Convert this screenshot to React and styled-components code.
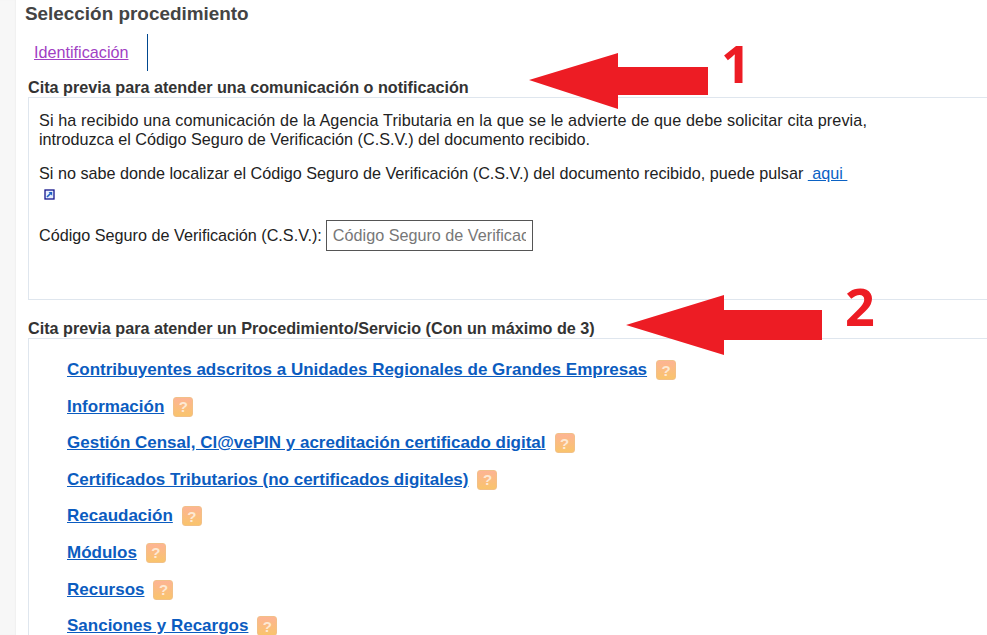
import React from 'react';
import styled, { createGlobalStyle } from 'styled-components';

const procedures = [
    'Contribuyentes adscritos a Unidades Regionales de Grandes Empresas',
    'Información',
    'Gestión Censal, Cl@vePIN y acreditación certificado digital',
    'Certificados Tributarios (no certificados digitales)',
    'Recaudación',
    'Módulos',
    'Recursos',
    'Sanciones y Recargos',
];

const App = () => (
    <Page>
        <GlobalStyle />
        <Sidebar />
        <Main>
            <Title>Selección procedimiento</Title>
            <Tabs>
                <Tab href="#">Identificación</Tab>
            </Tabs>
            <SectionTitle>Cita previa para atender una comunicación o notificación</SectionTitle>
            <CsvPanel>
                <p>
                    <WideLine>Si ha recibido una comunicación de la Agencia Tributaria en la que se le advierte de que debe solicitar cita previa,</WideLine><br />
                    introduzca el Código Seguro de Verificación (C.S.V.) del documento recibido.
                </p>
                <HelpText>
                    Si no sabe donde localizar el Código Seguro de Verificación (C.S.V.) del documento recibido, puede pulsar <HereLink href="#">&nbsp;aqui&nbsp;</HereLink>
                    <ExternalIcon viewBox="0 0 11 11">
                        <rect x="1" y="1" width="9" height="9" fill="#e6edfc" stroke="#14148c" strokeWidth="1.3" />
                        <path d="M3 8 L6.5 4.5" fill="none" stroke="#1c5fc4" strokeWidth="1.6" />
                        <path d="M4.5 3 H8.2 V6.7 Z" fill="#1c5fc4" />
                    </ExternalIcon>
                </HelpText>
                <CsvRow>
                    <label>Código Seguro de Verificación (C.S.V.):</label>
                    <CsvInput placeholder="Código Seguro de Verificación" />
                </CsvRow>
            </CsvPanel>
            <SecondTitle>Cita previa para atender un Procedimiento/Servicio (Con un máximo de 3)</SecondTitle>
            <ProcedurePanel>
                {procedures.map((name) => (
                    <Procedure key={name}>
                        <ProcedureLink href="#">{name}</ProcedureLink>
                        <HelpBadge>?</HelpBadge>
                    </Procedure>
                ))}
            </ProcedurePanel>
        </Main>
        <Arrow $left={529} $top={53} width="180" height="56" viewBox="0 0 180 56">
            <path d="M0 27 L89 0 V14 H179 V42 H89 V56 Z" fill="#ed1c24" />
        </Arrow>
        <Number $left={721} $top={33}>1</Number>
        <Arrow $left={626} $top={295} width="196" height="60" viewBox="0 0 196 60">
            <path d="M0 30 L98 0 V15 H196 V45 H98 V60 Z" fill="#ed1c24" />
        </Arrow>
        <Number $left={845} $top={276}>2</Number>
    </Page>
);

export default App;

const GlobalStyle = createGlobalStyle`
    html, body {
        margin: 0;
        background: #fff;
        overflow: hidden;
    }
    body {
        font-family: "Liberation Sans", Arial, sans-serif;
    }
`;

const Page = styled.div`
    position: relative;
    display: flex;
    width: 987px;
    height: 635px;
    overflow: hidden;
`;

const Sidebar = styled.div`
    flex: 0 0 16px;
    background: #f7f7f7;
    box-shadow: inset -1px 0 1px #f0f0f0;
`;

const Main = styled.div`
    flex: 1;
    min-width: 0;
    padding: 3px 0 0 9px;
`;

const Title = styled.h1`
    margin: 0;
    font-size: 18.9px;
    line-height: 21px;
    font-weight: bold;
    color: #444;
`;

const Tabs = styled.div`
    display: flex;
    margin: 10px 0 0 0;
    height: 37px;
`;

const Tab = styled.a`
    display: flex;
    align-items: center;
    padding: 0 18px 0 9px;
    border-right: 1px solid #00478f;
    font-size: 16.2px;
    color: #a13fc4;
    text-decoration: underline;
`;

const SectionTitle = styled.h2`
    margin: 7px 0 0 3px;
    font-size: 16.2px;
    line-height: 18px;
    font-weight: bold;
    color: #333;
`;

const SecondTitle = styled(SectionTitle)`
    margin-top: 19px;
`;

const CsvPanel = styled.div`
    box-sizing: border-box;
    height: 203px;
    margin: 1px -20px 0 3px;
    padding: 13px 10px;
    border: 1px solid #dfe6ee;
    font-size: 16.2px;
    line-height: 19px;
    color: #222;

    p {
        margin: 0;
        max-width: 860px;
    }
`;

const WideLine = styled.span`
    letter-spacing: 0.11px;
`;

const HelpText = styled.p`
    margin-top: 15px !important;
`;

const HereLink = styled.a`
    color: #0b62c4;
    text-decoration: underline;
`;

const ExternalIcon = styled.svg`
    display: block;
    width: 11px;
    height: 11px;
    margin: 6px 0 0 5px;
`;

const CsvRow = styled.div`
    display: flex;
    align-items: center;
    gap: 4px;
    margin-top: 20px;
`;

const CsvInput = styled.input`
    box-sizing: border-box;
    width: 207px;
    height: 31px;
    padding: 0 6px;
    border: 1px solid #555;
    border-radius: 0;
    outline: none;
    font: 16.2px "Liberation Sans", Arial, sans-serif;
    color: #222;

    &::placeholder {
        color: #777;
        opacity: 1;
    }
`;

const ProcedurePanel = styled.div`
    margin: 1px -20px 0 3px;
    padding: 21px 0 0 38px;
    border: 1px solid #dfe6ee;
    border-bottom: none;
`;

const Procedure = styled.div`
    display: flex;
    align-items: center;
    gap: 9px;
    height: 20px;
    margin-bottom: 16.6px;
`;

const ProcedureLink = styled.a`
    font-size: 17px;
    font-weight: bold;
    color: #0b5cc0;
    text-decoration: underline;
`;

const HelpBadge = styled.span`
    display: flex;
    align-items: center;
    justify-content: center;
    width: 20px;
    height: 20px;
    border-radius: 3px;
    background: linear-gradient(#fdb494, #f9c46c);
    border: 1px solid #f2c088;
    box-sizing: border-box;
    font-size: 15px;
    font-weight: bold;
    color: #fde9d4;
`;

const Arrow = styled.svg`
    position: absolute;
    left: ${(p) => p.$left}px;
    top: ${(p) => p.$top}px;
`;

const Number = styled.span`
    position: absolute;
    left: ${(p) => p.$left}px;
    top: ${(p) => p.$top}px;
    font-family: "Open Sans", "Liberation Sans", sans-serif;
    font-size: 52px;
    line-height: 60px;
    font-weight: 700;
    color: #ed1c24;
`;
